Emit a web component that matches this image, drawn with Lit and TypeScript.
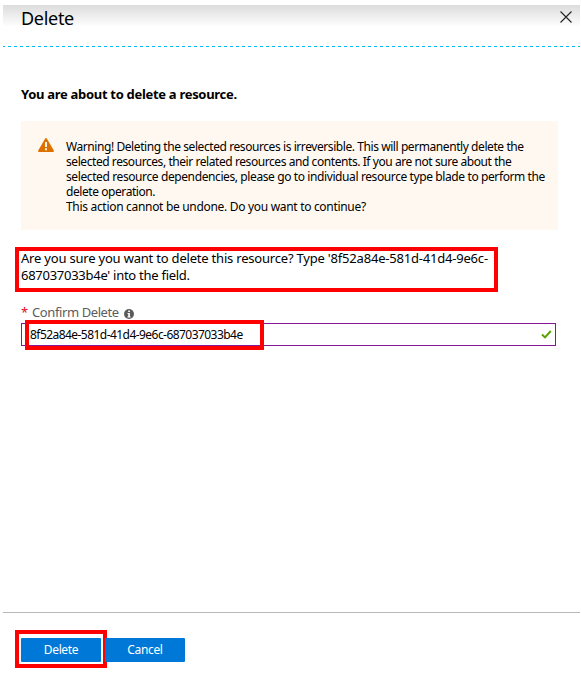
import { LitElement, html, css } from "lit";
import { customElement, property } from "lit/decorators.js";

@customElement("app-root")
export class AppRoot extends LitElement {
  @property() resourceId = "8f52a84e-581d-41d4-9e6c-687037033b4e";

  static styles = css`
    :host {
      display: block;
      width: 581px;
      height: 674px;
      overflow: hidden;
      background: #fff;
      color: #000;
      font: 12px/15px "Noto Sans", "Open Sans", sans-serif;
    }
    * { box-sizing: border-box; }
    .blade {
      display: flex;
      flex-direction: column;
      height: 674px;
      margin: 0 1px 0 3px;
      padding-top: 5px;
    }
    .header {
      flex: none;
      display: flex;
      justify-content: space-between;
      height: 41px;
      padding: 0 8px 0 18px;
      background: linear-gradient(#dcdcdc, #fff 22px);
    }
    .title { margin: 0; font-size: 18px; font-weight: 400; line-height: 26px; letter-spacing: -0.3px; }
    .close { width: 12px; height: 12px; margin-top: 6px; }
    .dashes {
      flex: none;
      height: 1px;
      background: repeating-linear-gradient(90deg, #00bcf2 0 2px, #fff 2px 5px, #00bcf2 5px 6px);
    }
    .content { flex: 1; padding: 39px 22px 0 18px; }
    .lead { margin: 0; height: 17px; font-size: 13px; line-height: 17px; font-weight: 700; letter-spacing: -0.3px; white-space: nowrap; }
    .warning {
      display: flex;
      height: 109px;
      margin-top: 18px;
      padding: 18px 0 0 17px;
      background: #fff8f1;
    }
    .warning svg { flex: none; width: 16px; height: 14px; margin-right: 12px; margin-top: -1px; }
    .line { display: block; white-space: nowrap; width: max-content; }
    .w1 { letter-spacing: -0.425px; }
    .w2 { letter-spacing: -0.43px; }
    .w3 { letter-spacing: -0.395px; }
    .w4 { letter-spacing: -0.43px; }
    .w5 { letter-spacing: -0.31px; }
    .question {
      position: relative;
      height: 34px;
      margin-top: 20px;
      font-size: 13px;
      line-height: 17px;
    }
    .q1 { letter-spacing: -0.2px; }
    .q2 { letter-spacing: -0.27px; }
    .mark { position: absolute; border: 4px solid #f00; pointer-events: none; }
    .mark-question { left: -6px; top: -3px; width: 483px; height: 45px; }
    .mark-field { left: 3px; top: -4px; width: 239px; height: 30px; }
    .mark-button { left: -6px; top: -8px; width: 92px; height: 38px; }
    .label {
      display: flex;
      height: 17px;
      margin-top: 20px;
      font-size: 13px;
      line-height: 17px;
      color: #5c5c5c;
    }
    .star { width: 11px; color: #e00b1c; }
    .name { width: 87px; letter-spacing: -0.4px; white-space: nowrap; }
    .label svg { width: 10px; height: 10px; margin: 5px 0 0 5px; }
    .field {
      position: relative;
      display: flex;
      align-items: center;
      justify-content: space-between;
      width: 535px;
      height: 23px;
      margin-top: 2px;
      padding: 0 3px 0 8px;
      border: 1px solid #881798;
    }
    .value { letter-spacing: -0.55px; }
    .field svg { width: 11px; height: 9px; }
    .footer {
      flex: none;
      display: flex;
      gap: 4px;
      height: 62px;
      padding: 25px 0 0 18px;
      border-top: 1px solid #b8b8b8;
    }
    .action { position: relative; width: 80px; height: 24px; }
    .button {
      width: 80px;
      height: 24px;
      padding: 0;
      border: 0;
      border-radius: 1px;
      background: #0078d7;
      color: #fff;
      font: inherit;
      line-height: 24px;
      letter-spacing: -0.35px;
    }
  `;

  render() {
    return html`
      <div class="blade">
        <div class="header">
          <h1 class="title">Delete</h1>
          <svg class="close" viewBox="0 0 12 12"><path d="M.5.5l11 11M11.5.5l-11 11" fill="none" stroke="#222" stroke-width="1.1"/></svg>
        </div>
        <div class="dashes"></div>
        <div class="content">
          <h2 class="lead">You are about to delete a resource.</h2>
          <div class="warning">
            <svg viewBox="0 0 16 14"><path d="M7.2.6Q8-.5 8.8.6L15.8 12.6Q16.2 14 15 14H1Q-.2 14 .2 12.6Z" fill="#dd7100"/><path d="M7 4h2v5H7zM7 10.3h2v2H7z" fill="#fff3e4"/></svg>
            <div>
              <span class="line w1">Warning! Deleting the selected resources is irreversible. This will permanently delete the</span>
              <span class="line w2">selected resources, their related resources and contents. If you are not sure about the</span>
              <span class="line w3">selected resource dependencies, please go to individual resource type blade to perform the</span>
              <span class="line w4">delete operation.</span>
              <span class="line w5">This action cannot be undone. Do you want to continue?</span>
            </div>
          </div>
          <div class="question">
            <span class="line q1">Are you sure you want to delete this resource? Type '${this.resourceId.slice(0, 24)}</span>
            <span class="line q2">${this.resourceId.slice(24)}' into the field.</span>
            <div class="mark mark-question"></div>
          </div>
          <div class="label">
            <span class="star">*</span><span class="name">Confirm Delete</span>
            <svg viewBox="0 0 10 10"><circle cx="5" cy="5" r="5" fill="#5c5c5c"/><path d="M4.2 1.5h1.7v1.6H4.2zM3.5 4h2.4v3.4h.7v1H3.5v-1h.7V5h-.7z" fill="#fff"/></svg>
          </div>
          <div class="field">
            <span class="value">${this.resourceId}</span>
            <svg viewBox="0 0 11 9"><path d="M1 4.5L4 7.4L9.8 1" fill="none" stroke="#57a300" stroke-width="2"/></svg>
            <div class="mark mark-field"></div>
          </div>
        </div>
        <div class="footer">
          <div class="action"><button class="button">Delete</button><div class="mark mark-button"></div></div>
          <div class="action"><button class="button">Cancel</button></div>
        </div>
      </div>
    `;
  }
}
